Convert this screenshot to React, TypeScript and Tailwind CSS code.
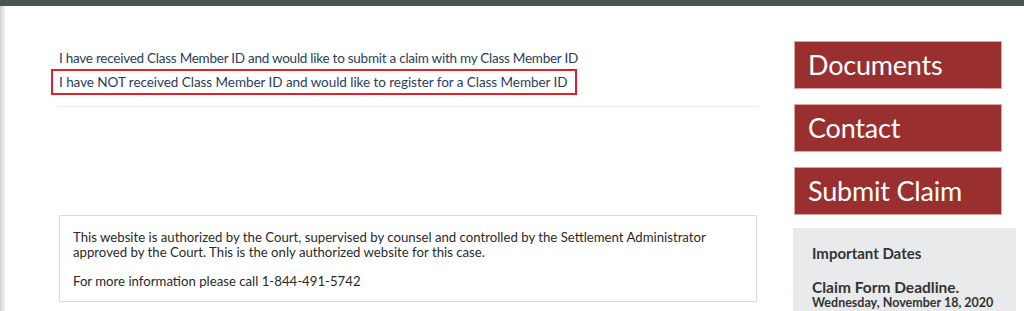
import React from "react";

const gill = { fontFamily: '"Lato", "Open Sans", sans-serif' };

function SideButton({ label }: { label: string }) {
  return (
    <a
      href="#"
      className="block h-[48px] w-[208px] border border-[#dca3a3] bg-[#9a2f2f] pl-[13px] text-[27px] leading-[46px] tracking-[-0.2px] text-white"
    >
      {label}
    </a>
  );
}

export default function App() {
  return (
    <div className="h-[311px] w-[1024px] overflow-hidden bg-white" style={gill}>
      <div className="h-[6px] bg-[#4a5654]" />
      <div className="flex h-[305px]">
        <div className="w-[5px] bg-gradient-to-r from-[#cfcfcf] to-[#f2f2f2]" />
        <div className="flex flex-1">
          <main className="w-[752px] pl-[54px]">
            <div className="pt-[42px] text-[13.5px] text-[#2b3d58]">
              <div className="leading-[20px] tracking-[-0.25px]">
                <a href="#">I have received Class Member ID and would like to submit a claim with my Class Member ID</a>
              </div>
              <div className="-ml-[8px] mt-[1px] inline-block border-2 border-[#e2202b] pl-[6px] pr-[7px] leading-[22px] tracking-[-0.05px]">
                <a href="#">I have NOT received Class Member ID and would like to register for a Class Member ID</a>
              </div>
            </div>
            <div className="mt-[11px] h-px w-[698px] bg-[#ececec]" />
            <div className="mt-[108px] w-[698px] border border-[#dcdcdc] px-[13px] pt-[14px] pb-[12px] text-[13.2px] leading-[15px] text-[#2a2a2a]">
              <p>
                This website is authorized by the Court, supervised by counsel and controlled by the Settlement Administrator approved by the Court. This is the only authorized website for this case.
              </p>
              <p className="mt-[14px]">For more information please call 1-844-491-5742</p>
            </div>
          </main>
          <aside className="ml-[36px] flex flex-col">
            <div className="mt-[35px] ml-[1px] flex flex-col gap-[15px]">
              <SideButton label="Documents" />
              <SideButton label="Contact" />
              <SideButton label="Submit Claim" />
            </div>
            <div className="mt-[13px] w-[223px] flex-1 bg-[#e9eaeb] px-[19px] pt-[16px] text-[#333]">
              <div className="text-[15px] font-bold leading-[18px]">Important Dates</div>
              <div className="mt-[16px] text-[15.5px] font-bold leading-[18px]">Claim Form Deadline.</div>
              <div className="text-[12.5px] font-bold leading-[14px]">Wednesday, November 18, 2020</div>
            </div>
          </aside>
        </div>
      </div>
    </div>
  );
}
